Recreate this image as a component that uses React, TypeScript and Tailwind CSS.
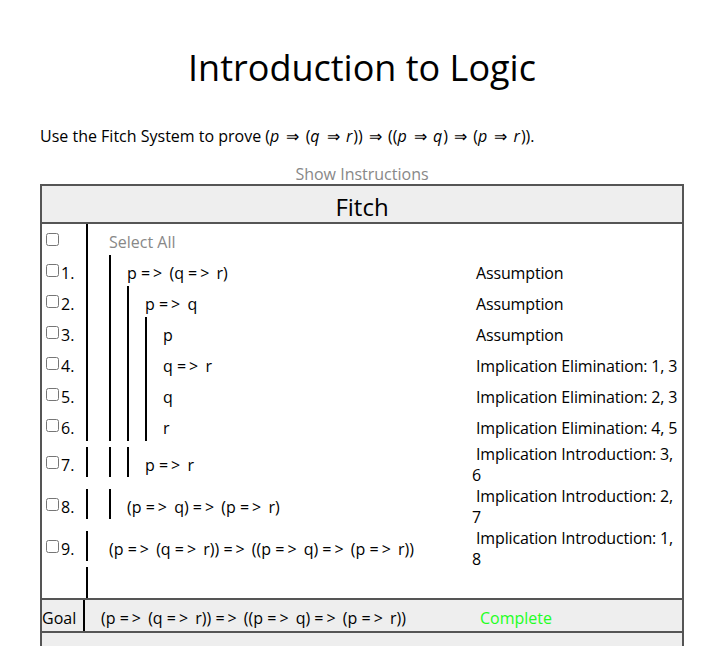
import React from 'react';

type Line = {
  n: number;
  depth: number;
  formula: string;
  reason: string[];
};

// proof lines, depth = number of open subproofs
const lines: Line[] = [
  { n: 1, depth: 1, formula: 'p => (q => r)', reason: ['Assumption'] },
  { n: 2, depth: 2, formula: 'p => q', reason: ['Assumption'] },
  { n: 3, depth: 3, formula: 'p', reason: ['Assumption'] },
  { n: 4, depth: 3, formula: 'q => r', reason: ['Implication Elimination: 1, 3'] },
  { n: 5, depth: 3, formula: 'q', reason: ['Implication Elimination: 2, 3'] },
  { n: 6, depth: 3, formula: 'r', reason: ['Implication Elimination: 4, 5'] },
  { n: 7, depth: 2, formula: 'p => r', reason: ['Implication Introduction: 3,', '6'] },
  { n: 8, depth: 1, formula: '(p => q) => (p => r)', reason: ['Implication Introduction: 2,', '7'] },
  { n: 9, depth: 0, formula: '(p => (q => r)) => ((p => q) => (p => r))', reason: ['Implication Introduction: 1,', '8'] },
];

// text sits a little low in the original font
const sh = 'pt-[6px] leading-[21px]';

// render a formula with the wide "=>" of the original font
const Formula: React.FC<{ text: string }> = ({ text }) => {
  const parts = text.split('=>');
  return (
    <span>
      {parts.map((p, i) => (
        <React.Fragment key={i}>
          {p}
          {i < parts.length - 1 && <span className="tracking-[3px]">=&gt;</span>}
        </React.Fragment>
      ))}
    </span>
  );
};

const Bars: React.FC<{ depth: number; children?: React.ReactNode; tall?: boolean }> = ({ depth, children, tall }) => (
  <div className={`flex items-center border-l-2 border-black pl-[5px] ${tall ? 'h-[30px]' : 'h-full'}`}>
    {Array.from({ length: depth }).map((_, i) => (
      <div key={i} className="ml-4 h-full w-[2px] bg-black" />
    ))}
    <div className={`ml-4 whitespace-nowrap ${sh}`}>{children}</div>
  </div>
);

const V: React.FC<{ children: React.ReactNode }> = ({ children }) => <i className="pr-[1px]">{children}</i>;
const Imp = () => <span className="px-[2px]">⇒</span>;

export default function App() {
  return (
    <div className="min-h-screen bg-white text-black text-[16px]" style={{ fontFamily: '"Open Sans", "Noto Sans", sans-serif' }}>
      <div className="ml-[40px] w-[644px]">
        <h1 className="pt-[46px] text-center text-[36px] leading-[43px]">Introduction to Logic</h1>

        <p className="mt-[37px] leading-[21px]">
          Use the Fitch System to prove (<V>p</V> <Imp /> (<V>q</V> <Imp /> <V>r</V>)) <Imp /> ((<V>p</V> <Imp /> <V>q</V>) <Imp /> (<V>p</V> <Imp /> <V>r</V>)).
        </p>

        <div className="mt-[16px] h-[21px] text-center leading-[22px] text-[#888]">Show Instructions</div>

        <div className="border-2 border-[#555]">
          <div className="flex h-[38px] items-center justify-center border-b-2 border-[#555] bg-[#eee] text-[24px]">
            <span className="pt-[6px] leading-[30px]">Fitch</span>
          </div>

          {/* select all */}
          <div className="flex h-[31px] items-center">
            <div className="flex h-full w-[44px] items-center">
              <input type="checkbox" className="m-0 ml-[4px] h-[13px] w-[13px]" />
            </div>
            <div className="h-full flex-1">
              <Bars depth={0}>
                <span className="text-[#888]">Select All</span>
              </Bars>
            </div>
          </div>

          {lines.map((l) => {
            const tall = l.reason.length > 1;
            return (
              <div key={l.n} className={`flex items-center ${tall ? 'h-[42px]' : 'h-[31px]'}`}>
                <div className="flex h-full w-[44px] items-center">
                  <input type="checkbox" className="m-0 ml-[4px] h-[13px] w-[13px]" />
                  <span className={`ml-[2px] ${sh}`}>{l.n}.</span>
                </div>
                <div className="flex h-full w-[386px] items-center">
                  <Bars depth={l.depth} tall={tall}>
                    <Formula text={l.formula} />
                  </Bars>
                </div>
                <div className={`w-[210px] tracking-[-0.15px] ${sh}`}>
                  {l.reason.map((r, i) => (
                    <div key={i} className="whitespace-nowrap">
                      {i === 0 ? '\u00a0' + r : r}
                    </div>
                  ))}
                </div>
              </div>
            );
          })}

          {/* empty trailing row */}
          <div className="flex h-[31px]">
            <div className="w-[44px]" />
            <div className="h-full border-l-2 border-black" />
          </div>

          {/* goal */}
          <div className="flex h-[35px] items-center border-y-2 border-[#555] bg-[#eee]">
            <div className={`w-[41px] ${sh}`}>Goal</div>
            <div className="flex h-full w-[392px] items-center border-l-2 border-black pl-4">
              <span className={sh}>
                <Formula text="(p => (q => r)) => ((p => q) => (p => r))" />
              </span>
            </div>
            <div className={`pl-[5px] text-[#2f2] ${sh}`}>Complete</div>
          </div>

          <div className="h-[40px] bg-[#eee]" />
        </div>
      </div>
    </div>
  );
}
